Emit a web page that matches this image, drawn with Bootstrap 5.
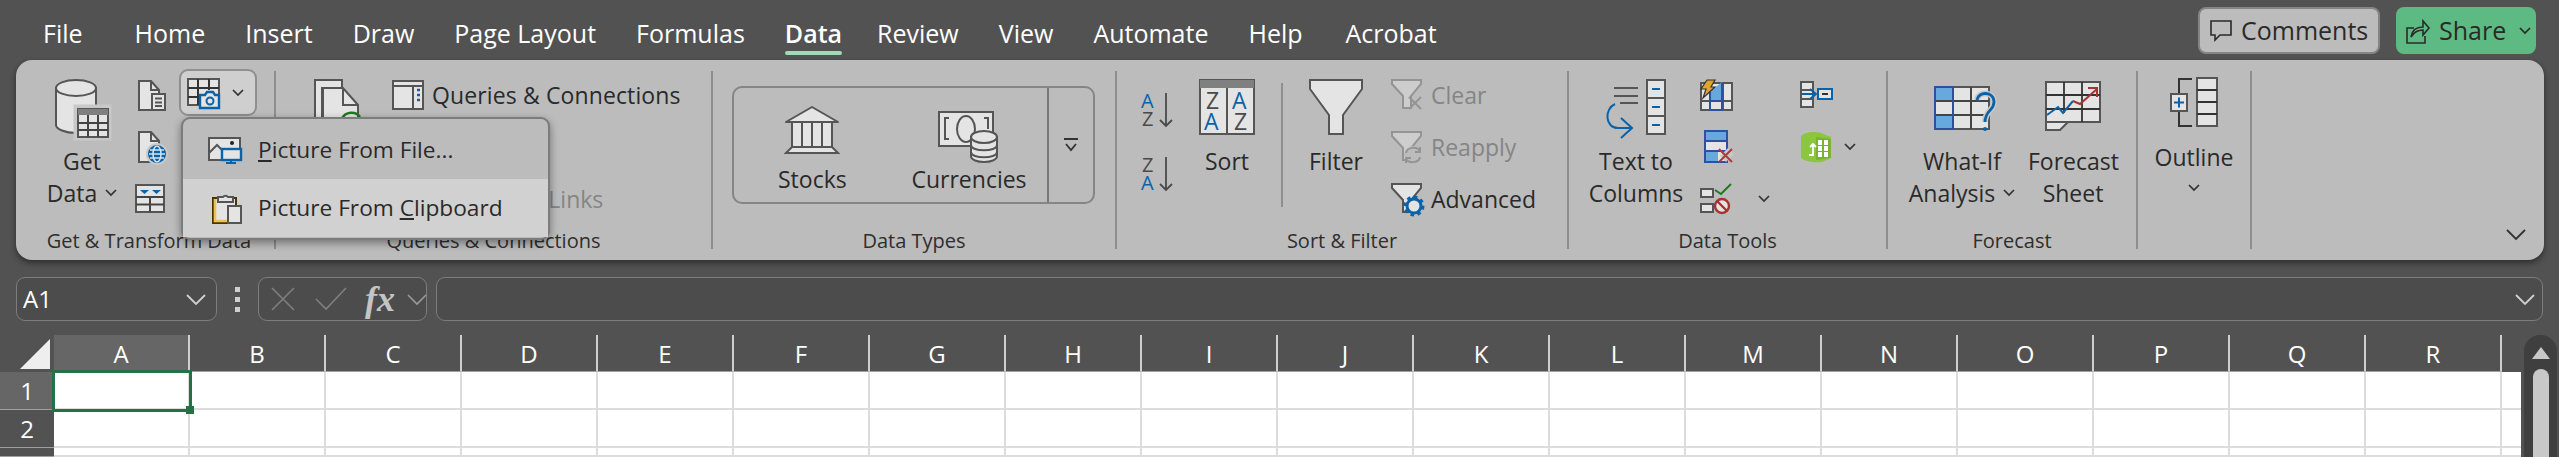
<!DOCTYPE html>
<html lang="en">
<head>
    <meta charset="UTF-8">
    <meta name="viewport" content="width=device-width, initial-scale=1.0">
    <title>Excel Data Ribbon</title>
    <link href="https://cdn.jsdelivr.net/npm/bootstrap@5.3.0/dist/css/bootstrap.min.css" rel="stylesheet">
    <script src="https://cdn.jsdelivr.net/npm/bootstrap@5.3.0/dist/js/bootstrap.bundle.min.js"></script>
    <style>
        html, body { height: 457px; overflow: hidden; }
        body { background: #525252; font-family: "Open Sans", "Noto Sans", sans-serif; color: #2a2a2a; }
        svg { display: block; flex: none; overflow: visible; }

        /* title row */
        .top-bar { height: 60px; padding: 7px 23px 0 43px; }
        .tab-list { gap: 40px; }
        .tab-item { color: #fff; font-size: 25px; line-height: 32px; padding-top: 10px; position: relative; white-space: nowrap; }
        .tab-first { margin-right: 12px; }
        .tab-on { font-weight: 600; margin-right: -5px; }
        .tab-help { margin-right: 3px; }
        .tab-on::after { content: ""; position: absolute; left: 0; right: 0; top: 44px; height: 4px; border-radius: 2px; background: #a3d9b6; }
        .top-btn { height: 47px; border-radius: 8px; font-size: 25px; color: #2a2a2a; gap: 9px; white-space: nowrap; }
        .btn-comments { width: 182px; background: #bcbcbc; border: 2px solid #858585; padding-left: 10px; }
        .btn-share { width: 140px; margin-left: 16px; background: #5dba82; padding-left: 10px; }

        /* ribbon */
        .ribbon-bar { height: 200px; margin: 0 15px 0 16px; padding: 11px 0; background: #bcbcbc; border-radius: 16px; box-shadow: 0 3px 6px rgba(0,0,0,.45); position: relative; }
        .rb-group { height: 178px; border-right: 2px solid #8e8e8e; flex: none; }
        .g-get { width: 260px; }
        .g-query { width: 437px; }
        .g-types { width: 404px; }
        .g-sort { width: 452px; }
        .g-tools { width: 319px; }
        .g-cast { width: 250px; }
        .g-outline { width: 114px; }
        .rb-body { height: 162px; }
        .rb-label { height: 16px; line-height: 16px; font-size: 20px; color: #2e2e2e; text-align: center; white-space: nowrap; }
        .rb-text { font-size: 23px; line-height: 32px; white-space: nowrap; }
        .rb-off { color: #858585; }
        .tall-btn { flex: none; }
        .tall-icon { height: 74px; padding-top: 8px; }
        .tall-btn .rb-text { text-align: center; }
        .small-col { flex: none; gap: 4px; }
        .small-row { height: 48px; gap: 8px; }
        .camera-btn { width: 78px; height: 47px; margin-top: -2px; padding-left: 5px; gap: 12px; background: #cfcfcf; border: 2px solid #8f8f8f; border-radius: 9px; }

        .gallery-box { width: 363px; height: 118px; margin: 15px 0 0 19px; border: 2px solid #858585; border-radius: 10px; }
        .gallery-item { width: 158px; height: 100%; }
        .gallery-more { width: 46px; margin-left: auto; border-left: 2px solid #777; }
        .inner-line { width: 2px; height: 124px; margin-top: 12px; background: #8e8e8e; flex: none; }
        .rb-collapse { position: absolute; right: 18px; bottom: 20px; }

        /* menu that dropped down from the camera button */
        .drop-menu { position: absolute; left: 165px; top: 57px; width: 369px; height: 123px; padding-top: 60px; background: #bcbcbc; border: 2px solid #7c7c7c; border-radius: 9px; box-shadow: 0 3px 8px rgba(0,0,0,.4); z-index: 5; }
        .drop-row { height: 58px; gap: 16px; padding-left: 25px; font-size: 22.7px; white-space: nowrap; }
        .drop-first { position: absolute; left: 0; top: 2px; }
        .drop-hot { background: #d1d1d1; }

        /* formula bar */
        .fx-bar { height: 44px; margin: 17px 16px 14px; gap: 9px; }
        .fx-box { height: 44px; background: #4c4c4c; border: 1px solid #7d7d7d; border-radius: 9px; color: #fff; }
        .fx-name { width: 201px; padding: 0 10px 0 6px; font-size: 24px; }
        .fx-tools { width: 169px; padding: 0 3px 0 12px; }
        .fx-input { padding-right: 7px; }
        .fx-dots { width: 23px; gap: 5px; }
        .fx-dots span { width: 5px; height: 5px; background: #cfcfcf; }
        .fx-check { margin-left: 20px; }
        .fx-italic { margin-left: 18px; font-family: "Liberation Serif", serif; font-style: italic; font-weight: 700; font-size: 36px; color: #c4c4c4; line-height: 1; }
        .fx-more { margin-left: 12px; }

        /* sheet */
        .sheet-wrap { height: 122px; }
        .sheet-grid { width: 2521px; }
        .grid-row { height: 38px; }
        .grid-head { height: 37px; }
        .grid-rest { height: 9px; }
        .row-no { width: 54px; flex: none; color: #fff; font-size: 24px; text-align: center; line-height: 38px; border-bottom: 1px solid #a0a0a0; }
        .col-no { width: 136px; flex: none; color: #fff; font-size: 24px; line-height: 38px; text-align: center; border-right: 2px solid #cfcfcf; border-bottom: 1px solid #a0a0a0; }
        .col-on, .row-on { background: #666; }
        .cell-box { width: 136px; flex: none; background: #fff; border-right: 2px solid #dcdcdc; border-bottom: 2px solid #dcdcdc; position: relative; }
        .cell-tail { flex: 1; background: #fff; border-bottom: 2px solid #dcdcdc; }
        .cell-sel { position: absolute; left: -2px; top: -2px; width: 140px; height: 42px; border: 3px solid #217346; z-index: 2; }
        .cell-grip { position: absolute; right: -5px; bottom: -5px; width: 8px; height: 8px; background: #217346; border: 0; }
        .corner-cell { width: 54px; flex: none; padding: 4px 0 0 20px; }
        .scroll-track { width: 33px; margin-left: 3px; background: #3f3f3f; border-radius: 16px 16px 0 0; padding-top: 12px; gap: 9px; }
        .scroll-thumb { width: 16px; height: 100px; background: #c8c8c8; border-radius: 8px 8px 0 0; }
    </style>
</head>
<body>
    <!-- Tabs -->
    <div class="top-bar d-flex justify-content-between">
        <div class="tab-list d-flex">
            <div class="tab-item tab-first">File</div>
            <div class="tab-item">Home</div>
            <div class="tab-item">Insert</div>
            <div class="tab-item">Draw</div>
            <div class="tab-item">Page Layout</div>
            <div class="tab-item">Formulas</div>
            <div class="tab-item tab-on">Data</div>
            <div class="tab-item">Review</div>
            <div class="tab-item">View</div>
            <div class="tab-item">Automate</div>
            <div class="tab-item tab-help">Help</div>
            <div class="tab-item">Acrobat</div>
        </div>
        <div class="d-flex">
            <div class="top-btn btn-comments d-flex align-items-center">
                <svg width="22" height="24" viewBox="0 0 22 24" fill="none" stroke="#2a2a2a" stroke-width="1.6"><path d="M1 2h20v14H10l-5 5v-5H1z"/></svg>
                Comments
            </div>
            <div class="top-btn btn-share d-flex align-items-center">
                <svg width="24" height="26" viewBox="0 0 24 26" fill="none" stroke="#2a2a2a" stroke-width="1.6"><path d="M8 10H1v15h18v-7"/><path d="M5 19c1-7 6-10 12-10V3l6 7-6 7v-5c-5 0-9 2-12 7z"/></svg>
                Share
                <svg class="ms-1" width="12" height="8" viewBox="0 0 12 8" fill="none" stroke="#2a2a2a" stroke-width="1.7"><path d="M1 1l5 5 5-5"/></svg>
            </div>
        </div>
    </div>

    <!-- Ribbon -->
    <div class="ribbon-bar d-flex">
        <!-- Get & Transform Data -->
        <div class="rb-group g-get">
            <div class="rb-body d-flex">
                <div class="tall-btn" style="width:88px;margin-left:22px">
                    <div class="tall-icon d-flex justify-content-center">
                        <svg width="56" height="60" viewBox="0 0 56 60"><path d="M2 9V46c0 4 9 8 20 8s20-4 20-8V9z" fill="#e4e4e4" stroke="#555" stroke-width="2"/><ellipse cx="22" cy="9" rx="20" ry="8" fill="#e4e4e4" stroke="#555" stroke-width="2"/><rect x="22" y="28" width="33" height="31" fill="#e4e4e4" stroke="#c8c8c8" stroke-width="5"/><rect x="24" y="30" width="30" height="28" fill="#e4e4e4" stroke="#555" stroke-width="2"/><rect x="24" y="30" width="30" height="6" fill="#7f7f7f"/><path d="M34 36v22M44 36v22M24 44h30M24 51h30" stroke="#444" stroke-width="2"/></svg>
                    </div>
                    <div class="rb-text">Get</div>
                    <div class="rb-text d-flex align-items-center justify-content-center gap-2">Data <svg width="12" height="8" viewBox="0 0 12 8" fill="none" stroke="#333" stroke-width="1.7"><path d="M1 1l5 5 5-5"/></svg></div>
                </div>
                <div class="small-col d-flex flex-column" style="width:45px;margin-left:8px">
                    <div class="small-row d-flex align-items-center">
                        <svg width="32" height="32" viewBox="0 0 32 32"><path d="M5 2h12l8 9v20H5z" fill="#e4e4e4" stroke="#555" stroke-width="2"/><path d="M17 2v9h8" fill="none" stroke="#555" stroke-width="2"/><rect x="18" y="15" width="13" height="16" fill="#e4e4e4" stroke="#555" stroke-width="2"/><path d="M21 19.5h7M21 23.5h7M21 27h7" stroke="#555" stroke-width="2"/></svg>
                    </div>
                    <div class="small-row d-flex align-items-center">
                        <svg width="32" height="34" viewBox="0 0 32 34"><path d="M5 2h12l8 9v21H5z" fill="#e4e4e4" stroke="#555" stroke-width="2"/><path d="M17 2v9h8" fill="none" stroke="#555" stroke-width="2"/><circle cx="23" cy="24" r="11" fill="#c8c8c8"/><circle cx="23" cy="24" r="9" fill="#0a63a8"/><ellipse cx="23" cy="24" rx="4" ry="8" fill="none" stroke="#d6e4ee" stroke-width="1.5"/><path d="M15 24h16M16 20h14M16 28h14" stroke="#d6e4ee" stroke-width="1.5"/></svg>
                    </div>
                    <div class="small-row d-flex align-items-center">
                        <svg width="32" height="30" viewBox="0 0 32 30"><rect x="2" y="1" width="28" height="27" fill="#e4e4e4" stroke="#555" stroke-width="2"/><path d="M6 6h9l-4.500 4zM18 6h9l-4.500 4z" fill="#0a63a8"/><path d="M2 13h28M2 20.500h28M16 13v15" stroke="#444" stroke-width="2"/></svg>
                    </div>
                </div>
                <div class="camera-btn d-flex align-items-center">
                    <svg width="34" height="32" viewBox="0 0 34 32"><path d="M2 2h31v16H14v10H2z" fill="#e4e4e4" stroke="#555" stroke-width="2"/><path d="M2 11h31M2 20h12M12 2v26M23 2v11" fill="none" stroke="#333" stroke-width="2"/><path d="M14 18h5l2-3h6l2 3h4v13H14z" fill="#e4e4e4" stroke="#0a63a8" stroke-width="2.400"/><circle cx="24" cy="24" r="3.500" fill="none" stroke="#0a63a8" stroke-width="2"/></svg>
                    <svg width="12" height="8" viewBox="0 0 12 8" fill="none" stroke="#333" stroke-width="1.7"><path d="M1 1l5 5 5-5"/></svg>
                </div>
            </div>
            <div class="rb-label ps-2">Get &amp; Transform Data</div>
        </div>

        <!-- Queries & Connections -->
        <div class="rb-group g-query">
            <div class="rb-body d-flex">
                <div class="tall-btn" style="width:116px;padding-left:38px">
                    <div class="tall-icon">
                        <svg width="56" height="62" viewBox="0 0 56 62"><path d="M1 1h27v8H8v42H1z" fill="#e4e4e4" stroke="#555" stroke-width="2"/><path d="M9 9h20l15 17v30H9z" fill="#e4e4e4" stroke="#555" stroke-width="2"/><path d="M29 9v17h15" fill="none" stroke="#555" stroke-width="2"/><path d="M28 40c3-8 14-8 18-2" fill="none" stroke="#1e7a1e" stroke-width="2.400"/></svg>
                    </div>
                </div>
                <div class="small-col d-flex flex-column">
                    <div class="small-row d-flex align-items-center">
                        <svg width="32" height="30" viewBox="0 0 32 30"><rect x="1" y="1" width="30" height="28" fill="#e4e4e4" stroke="#555" stroke-width="2"/><path d="M1 6h30" stroke="#555" stroke-width="2"/><path d="M21 6v23" stroke="#555" stroke-width="2"/><path d="M25 10h3M25 15h3M25 20h3" stroke="#0a63a8" stroke-width="2.400"/></svg>
                        <span class="rb-text" style="letter-spacing:.12px">Queries &amp; Connections</span>
                    </div>
                    <div class="small-row"></div>
                    <div class="small-row d-flex align-items-center">
                        <svg width="32" height="30" viewBox="0 0 32 30"></svg>
                        <span class="rb-text rb-off">Workbook Links</span>
                    </div>
                </div>
            </div>
            <div class="rb-label">Queries &amp; Connections</div>
        </div>

        <!-- Data Types -->
        <div class="rb-group g-types">
            <div class="rb-body d-flex">
                <div class="gallery-box d-flex">
                    <div class="gallery-item d-flex flex-column align-items-center">
                        <svg style="margin-top:17px" width="56" height="50" viewBox="0 0 56 50"><path d="M28 2L2 17h52z" fill="#e4e4e4" stroke="#555" stroke-width="2" stroke-linejoin="round"/><rect x="8" y="17" width="40" height="25" fill="#e4e4e4" stroke="#555" stroke-width="2"/><path d="M18 17v25M28 17v25M38 17v25" stroke="#555" stroke-width="2"/><path d="M8 42h40l6 6H2z" fill="#e4e4e4" stroke="#555" stroke-width="2"/></svg>
                        <div class="rb-text" style="margin-top:8px">Stocks</div>
                    </div>
                    <div class="gallery-item d-flex flex-column align-items-center">
                        <svg style="margin-top:23px" width="62" height="52" viewBox="0 0 62 52"><rect x="1" y="1" width="54" height="34" fill="#e4e4e4" stroke="#555" stroke-width="2"/><path d="M11 7H7v21h4M46 7h4v11" fill="none" stroke="#555" stroke-width="2"/><ellipse cx="28" cy="18" rx="9" ry="13" fill="none" stroke="#555" stroke-width="2"/><path d="M33 26v19c0 8 26 8 26 0V26z" fill="#e4e4e4" stroke="#555" stroke-width="2"/><ellipse cx="46" cy="26" rx="13" ry="6" fill="#e4e4e4" stroke="#555" stroke-width="2"/><path d="M33 34c0 7 26 7 26 0M33 41c0 7 26 7 26 0" fill="none" stroke="#555" stroke-width="2"/></svg>
                        <div class="rb-text">Currencies</div>
                    </div>
                    <div class="gallery-more d-flex align-items-center justify-content-center">
                        <svg width="16" height="14" viewBox="0 0 16 14" fill="none" stroke="#333" stroke-width="1.8"><path d="M1 1h14M3 6l5 6 5-6"/></svg>
                    </div>
                </div>
            </div>
            <div class="rb-label">Data Types</div>
        </div>

        <!-- Sort & Filter -->
        <div class="rb-group g-sort">
            <div class="rb-body d-flex">
                <div class="small-col d-flex flex-column" style="width:58px;margin-left:24px;gap:28px;padding-top:21px">
                    <svg width="34" height="36" viewBox="0 0 34 36"><text x="0" y="16" font-family="Open Sans" font-size="20" fill="#0a63a8">A</text><text x="1" y="34" font-family="Open Sans" font-size="20" fill="#4a4a4a">Z</text><path d="M25 1v33M19 28l6 6 6-6" fill="none" stroke="#4a4a4a" stroke-width="1.800"/></svg>
                    <svg width="34" height="36" viewBox="0 0 34 36"><text x="1" y="16" font-family="Open Sans" font-size="20" fill="#4a4a4a">Z</text><text x="0" y="34" font-family="Open Sans" font-size="20" fill="#0a63a8">A</text><path d="M25 1v33M19 28l6 6 6-6" fill="none" stroke="#4a4a4a" stroke-width="1.800"/></svg>
                </div>
                <div class="tall-btn" style="width:56px">
                    <div class="tall-icon d-flex justify-content-center">
                        <svg width="56" height="56" viewBox="0 0 56 56"><rect x="1" y="1" width="54" height="54" fill="#e4e4e4" stroke="#555" stroke-width="2"/><rect x="1" y="1" width="54" height="8" fill="#808080"/><path d="M28 9v46" stroke="#555" stroke-width="2"/><text x="7" y="30" font-family="Open Sans" font-size="23" fill="#4a4a4a">Z</text><text x="5" y="51" font-family="Open Sans" font-size="23" fill="#0a63a8">A</text><text x="33" y="30" font-family="Open Sans" font-size="23" fill="#0a63a8">A</text><text x="35" y="51" font-family="Open Sans" font-size="23" fill="#4a4a4a">Z</text></svg>
                    </div>
                    <div class="rb-text">Sort</div>
                </div>
                <div class="inner-line" style="margin-left:26px"></div>
                <div class="tall-btn" style="width:70px;margin-left:18px">
                    <div class="tall-icon" style="padding-left:8px">
                        <svg width="54" height="56" viewBox="0 0 54 56"><path d="M1 1h52v9L34 36v19H20V36L1 10z" fill="#e4e4e4" stroke="#555" stroke-width="2"/></svg>
                    </div>
                    <div class="rb-text">Filter</div>
                </div>
                <div class="small-col d-flex flex-column" style="margin-left:20px">
                    <div class="small-row d-flex align-items-center">
                        <svg width="32" height="32" viewBox="0 0 32 32"><path d="M1 1h29v4L20 17v12h-8V17L1 5z" fill="#cdcdcd" stroke="#949494" stroke-width="2"/><path d="M18 18l12 12M30 18L18 30" stroke="#949494" stroke-width="2"/></svg>
                        <span class="rb-text rb-off">Clear</span>
                    </div>
                    <div class="small-row d-flex align-items-center">
                        <svg width="32" height="32" viewBox="0 0 32 32"><path d="M1 1h29v4L20 17v12h-8V17L1 5z" fill="#cdcdcd" stroke="#949494" stroke-width="2"/><circle cx="22" cy="24" r="9" fill="#bcbcbc"/><path d="M15 22c1-6 11-7 14-2M29 26c-1 6-11 7-14 2M29 16v5h-5M15 32v-5h5" fill="none" stroke="#949494" stroke-width="2"/></svg>
                        <span class="rb-text rb-off">Reapply</span>
                    </div>
                    <div class="small-row d-flex align-items-center">
                        <svg width="32" height="32" viewBox="0 0 32 32"><path d="M1 1h29v4L20 17v12h-8V17L1 5z" fill="#e4e4e4" stroke="#555" stroke-width="2"/><circle cx="23" cy="23" r="7" fill="#e4e4e4" stroke="#0a63a8" stroke-width="3"/><circle cx="23" cy="23" r="9" fill="none" stroke="#0a63a8" stroke-width="3" stroke-dasharray="3.500 3.500"/></svg>
                        <span class="rb-text">Advanced</span>
                    </div>
                </div>
            </div>
            <div class="rb-label">Sort &amp; Filter</div>
        </div>

        <!-- Data Tools -->
        <div class="rb-group g-tools">
            <div class="rb-body d-flex">
                <div class="tall-btn" style="width:130px;padding-left:4px">
                    <div class="tall-icon d-flex justify-content-center">
                        <svg width="60" height="60" viewBox="0 0 60 60"><path d="M8 9h24M8 17h24M14 24h18" stroke="#555" stroke-width="2"/><rect x="41" y="1" width="18" height="54" fill="#e4e4e4" stroke="#555" stroke-width="2"/><path d="M41 19h18M41 37h18" stroke="#555" stroke-width="2"/><path d="M46 10h8M46 28h8M46 46h8" stroke="#0a63a8" stroke-width="2.200"/><path d="M9 25C-2 30-1 49 12 49h14M15 39l11 10-11 10" fill="none" stroke="#0a63a8" stroke-width="2"/></svg>
                    </div>
                    <div class="rb-text">Text to</div>
                    <div class="rb-text">Columns</div>
                </div>
                <div class="small-col d-flex flex-column" style="width:100px;margin-left:1px">
                    <div class="small-row d-flex align-items-center">
                        <svg width="34" height="32" viewBox="0 0 34 32"><path d="M1 4h31v27H1z" fill="#e4e4e4" stroke="#555" stroke-width="2"/><path d="M1 22h31M23 4v27" stroke="#555" stroke-width="2"/><path d="M10 13L22 3v19H10z" fill="#67a9dc"/><path d="M10 13v18M22 4v27M10 22h12M10 31h12" stroke="#2f4f9f" stroke-width="2"/><path d="M7 1h8l-4 7h4L3 19l3-9H1z" fill="#e0a42b" stroke="#333" stroke-width="1.200"/></svg>
                    </div>
                    <div class="small-row d-flex align-items-center">
                        <svg width="34" height="34" viewBox="0 0 34 34" style="margin-left:4px"><rect x="1" y="1" width="22" height="31" fill="#e4e4e4" stroke="#2f4f9f" stroke-width="2"/><rect x="2" y="2" width="20" height="9" fill="#67a9dc"/><rect x="2" y="22" width="12" height="9" fill="#67a9dc"/><path d="M1 11h22M1 21h22" stroke="#2f4f9f" stroke-width="2"/><path d="M16 26l8-8 6 6-8 8z" fill="#c8c8c8"/><path d="M15 19l13 13M28 19L15 32" stroke="#b03a3a" stroke-width="2"/></svg>
                    </div>
                    <div class="small-row d-flex align-items-center" style="gap:26px">
                        <svg width="32" height="32" viewBox="0 0 32 32"><path d="M1 6h12v8H1zM1 21h12v8H1z" fill="#e4e4e4" stroke="#555" stroke-width="2"/><path d="M15 7l6 4L31 1" fill="none" stroke="#1e7a1e" stroke-width="2"/><circle cx="22" cy="23" r="7" fill="#e4e4e4" stroke="#a83232" stroke-width="2.400"/><path d="M17 18l10 10" stroke="#a83232" stroke-width="2.400"/></svg>
                        <svg width="12" height="8" viewBox="0 0 12 8" fill="none" stroke="#333" stroke-width="1.7"><path d="M1 1l5 5 5-5"/></svg>
                    </div>
                </div>
                <div class="small-col d-flex flex-column">
                    <div class="small-row d-flex align-items-center">
                        <svg width="33" height="28" viewBox="0 0 33 28"><rect x="1" y="1" width="12" height="25" fill="#e4e4e4" stroke="#555" stroke-width="2"/><path d="M1 9h12M1 18h12" stroke="#555" stroke-width="2"/><path d="M2 13h14M10 8l6 5-6 5" fill="none" stroke="#0a63a8" stroke-width="2"/><rect x="18" y="8" width="14" height="10" fill="#e4e4e4" stroke="#0a63a8" stroke-width="2"/><path d="M22 13h6" stroke="#333" stroke-width="2"/></svg>
                    </div>
                    <div class="small-row d-flex align-items-center" style="gap:12px">
                        <svg width="32" height="32" viewBox="0 0 32 32"><path d="M1 5c4-4 14-5 20-3l10 4v21l-9 4C16 32 6 31 1 27z" fill="#8cc63f"/><path d="M16 6l15 2v19l-15 2z" fill="#7ab32e"/><path d="M18 9h4v5h-4zM24 9h4v5h-4zM18 15h4v5h-4zM24 15h4v5h-4zM18 21h4v5h-4zM24 21h4v5h-4z" fill="#fff"/><path d="M9 24h4V13M10 16l3-3 3 3" fill="none" stroke="#fff" stroke-width="1.800"/></svg>
                        <svg width="12" height="8" viewBox="0 0 12 8" fill="none" stroke="#333" stroke-width="1.7"><path d="M1 1l5 5 5-5"/></svg>
                    </div>
                </div>
            </div>
            <div class="rb-label">Data Tools</div>
        </div>

        <!-- Forecast -->
        <div class="rb-group g-cast">
            <div class="rb-body d-flex">
                <div class="tall-btn" style="width:148px">
                    <div class="tall-icon" style="padding-top:15px;padding-left:46px">
                        <svg width="62" height="56" viewBox="0 0 62 56"><rect x="1" y="1" width="54" height="42" fill="#e4e4e4" stroke="#555" stroke-width="2"/><rect x="1" y="1" width="18" height="14" fill="#67a9dc"/><rect x="1" y="29" width="18" height="14" fill="#67a9dc"/><path d="M1 15h54M1 29h54M19 1v42M37 1v42" stroke="#444" stroke-width="2"/><rect x="1" y="1" width="18" height="42" fill="none" stroke="#2f4f9f" stroke-width="2"/><path d="M43 14c1-9 17-9 17 2 0 9-9 8-9 20" fill="none" stroke="#c8c8c8" stroke-width="6"/><path d="M43 14c1-9 17-9 17 2 0 9-9 8-9 20" fill="none" stroke="#0a63a8" stroke-width="2.800"/><circle cx="51" cy="43" r="2" fill="#0a63a8"/></svg>
                    </div>
                    <div class="rb-text">What-If</div>
                    <div class="rb-text d-flex align-items-center justify-content-center gap-2">Analysis <svg width="12" height="8" viewBox="0 0 12 8" fill="none" stroke="#333" stroke-width="1.7"><path d="M1 1l5 5 5-5"/></svg></div>
                </div>
                <div class="tall-btn" style="width:90px;margin-left:-8px">
                    <div class="tall-icon d-flex justify-content-center" style="padding-top:10px">
                        <svg width="56" height="50" viewBox="0 0 56 50"><path d="M1 1h54v40H23l-8 8H1z" fill="#e4e4e4" stroke="#555" stroke-width="2"/><path d="M19 1v31M37 1v40M1 14h54M1 28h54" stroke="#333" stroke-width="1.800"/><path d="M1 41h22" stroke="#555" stroke-width="2"/><path d="M2 34l11-8 5 6 10-12" fill="none" stroke="#0a63a8" stroke-width="2"/><path d="M28 20l7 3 17-15M43 7h9v9" fill="none" stroke="#a83232" stroke-width="2"/></svg>
                    </div>
                    <div class="rb-text">Forecast</div>
                    <div class="rb-text">Sheet</div>
                </div>
            </div>
            <div class="rb-label">Forecast</div>
        </div>

        <!-- Outline -->
        <div class="rb-group g-outline">
            <div class="rb-body d-flex flex-column align-items-center">
                <svg style="margin-top:6px" width="48" height="51" viewBox="0 0 48 51"><path d="M9 17V2h13M9 34v15h13" fill="none" stroke="#333" stroke-width="2"/><rect x="27" y="1" width="20" height="48" fill="#e4e4e4" stroke="#555" stroke-width="2"/><path d="M27 13h20M27 25h20M27 37h20" stroke="#333" stroke-width="2"/><rect x="1" y="17" width="16" height="17" fill="#e4e4e4" stroke="#555" stroke-width="2"/><path d="M4 25.500h10M9 20.500v10" stroke="#0a63a8" stroke-width="2"/></svg>
                <div class="rb-text" style="margin-top:13px">Outline</div>
                <svg style="margin-top:11px" width="12" height="8" viewBox="0 0 12 8" fill="none" stroke="#333" stroke-width="1.7"><path d="M1 1l5 5 5-5"/></svg>
            </div>
        </div>

        <svg class="rb-collapse" width="20" height="11" viewBox="0 0 20 11" fill="none" stroke="#333" stroke-width="1.8"><path d="M1 1l9 9 9-9"/></svg>

        <!-- Camera dropdown -->
        <div class="drop-menu">
            <div class="drop-row drop-first d-flex align-items-center w-100">
                <svg width="34" height="28" viewBox="0 0 34 28"><path d="M1 2h31v22H1z" fill="#e4e4e4" stroke="#555" stroke-width="2"/><path d="M1 17l8-8 7 7" fill="none" stroke="#555" stroke-width="2"/><circle cx="24" cy="7" r="2" fill="#222"/><rect x="14" y="13" width="19" height="11" fill="#e4e4e4" stroke="#0a63a8" stroke-width="2.400"/><path d="M23 24v3M18 27h10" stroke="#0a63a8" stroke-width="2"/></svg>
                <span><u>P</u>icture From File...</span>
            </div>
            <div class="drop-row drop-hot d-flex align-items-center">
                <svg width="34" height="32" viewBox="0 0 34 32"><path d="M5 6h23v25H5z" fill="#e4e4e4" stroke="#4a3500" stroke-width="2"/><path d="M7 7v22h13" fill="none" stroke="#f0c050" stroke-width="2.600"/><path d="M10 10V5h5a3 3 0 0 1 5 0h5v5z" fill="#e4e4e4" stroke="#555" stroke-width="2"/><rect x="20" y="14" width="13" height="17" fill="#e4e4e4" stroke="#555" stroke-width="2"/></svg>
                <span>Picture From <u>C</u>lipboard</span>
            </div>
        </div>
    </div>

    <!-- Formula bar -->
    <div class="fx-bar d-flex">
        <div class="fx-box fx-name d-flex align-items-center justify-content-between">
            <span>A1</span>
            <svg width="20" height="11" viewBox="0 0 20 11" fill="none" stroke="#d0d0d0" stroke-width="1.8"><path d="M1 1l9 9 9-9"/></svg>
        </div>
        <div class="fx-dots d-flex flex-column align-items-center justify-content-center"><span></span><span></span><span></span></div>
        <div class="fx-box fx-tools d-flex align-items-center">
            <svg width="24" height="24" viewBox="0 0 24 24" fill="none" stroke="#7f7f7f" stroke-width="1.6"><path d="M1 1l22 22M23 1L1 23"/></svg>
            <svg class="fx-check" width="32" height="24" viewBox="0 0 32 24" fill="none" stroke="#7f7f7f" stroke-width="1.6"><path d="M1 12l10 10L31 1"/></svg>
            <span class="fx-italic">fx</span>
            <svg class="fx-more" width="20" height="11" viewBox="0 0 20 11" fill="none" stroke="#9a9a9a" stroke-width="1.6"><path d="M1 1l9 9 9-9"/></svg>
        </div>
        <div class="fx-box fx-input flex-grow-1 d-flex align-items-center justify-content-end">
            <svg width="20" height="11" viewBox="0 0 20 11" fill="none" stroke="#d0d0d0" stroke-width="1.8"><path d="M1 1l9 9 9-9"/></svg>
        </div>
    </div>

    <!-- Sheet -->
    <div class="sheet-wrap d-flex">
        <div class="sheet-grid">
            <div class="grid-head d-flex">
                <div class="corner-cell"><svg width="30" height="30" viewBox="0 0 30 30"><path d="M30 0v30H0z" fill="#eee"/></svg></div>
                <div class="col-no col-on">A</div><div class="col-no">B</div><div class="col-no">C</div><div class="col-no">D</div><div class="col-no">E</div><div class="col-no">F</div><div class="col-no">G</div><div class="col-no">H</div><div class="col-no">I</div><div class="col-no">J</div><div class="col-no">K</div><div class="col-no">L</div><div class="col-no">M</div><div class="col-no">N</div><div class="col-no">O</div><div class="col-no">P</div><div class="col-no">Q</div><div class="col-no">R</div>
            </div>
            <div class="grid-row d-flex" id="rowOne"></div>
            <div class="grid-row d-flex" id="rowTwo"></div>
            <div class="grid-rest d-flex" id="rowRest"></div>
        </div>
        <div class="scroll-track d-flex flex-column align-items-center">
            <svg width="18" height="13" viewBox="0 0 18 13"><path d="M9 0l9 12H0z" fill="#c8c8c8"/></svg>
            <div class="scroll-thumb"></div>
        </div>
    </div>

    <script>
        // Empty cells of the visible rows
        function fillRow(id, label, headClass) {
            const row = document.getElementById(id);
            let html = `<div class="row-no ${headClass}">${label}</div>`;
            for (let i = 0; i < 18; i++) {
                html += `<div class="cell-box"></div>`;
            }
            row.innerHTML = html + `<div class="cell-tail"></div>`;
        }

        fillRow('rowOne', '1', 'row-on');
        fillRow('rowTwo', '2', '');
        fillRow('rowRest', '', '');

        // Selected cell A1
        const selected = document.createElement('div');
        selected.className = 'cell-sel';
        selected.innerHTML = '<div class="cell-grip"></div>';
        document.querySelector('#rowOne .cell-box').appendChild(selected);
    </script>
</body>
</html>
